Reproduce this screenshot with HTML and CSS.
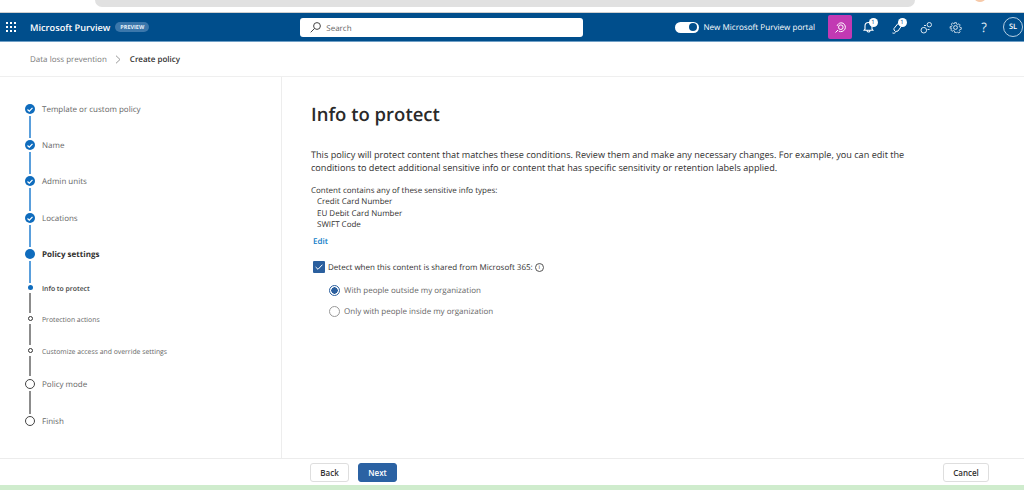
FILE: index.html
```html
<!DOCTYPE html>
<html lang="en">
<head>
<meta charset="utf-8">
<title>Microsoft Purview</title>
<link rel="stylesheet" href="styles.css">
</head>
<body>
<div class="chrome"><div class="chrome-bar"></div><span class="blob"></span></div>
<header class="topbar">
  <svg class="waffle" width="10" height="10" viewBox="0 0 10 10" fill="#fff"><rect x="0" y="0" width="2" height="2"/><rect x="4" y="0" width="2" height="2"/><rect x="8" y="0" width="2" height="2"/><rect x="0" y="4" width="2" height="2"/><rect x="4" y="4" width="2" height="2"/><rect x="8" y="4" width="2" height="2"/><rect x="0" y="8" width="2" height="2"/><rect x="4" y="8" width="2" height="2"/><rect x="8" y="8" width="2" height="2"/></svg>
  <span class="brand">Microsoft Purview</span>
  <span class="preview">PREVIEW</span>
  <div class="search">
    <svg width="11" height="11" viewBox="0 0 11 11" fill="none" stroke="#444" stroke-width="1"><circle cx="7" cy="4" r="3.400"/><path d="M4.500 6.500 .7 10.300"/></svg>
    <span class="search-text">Search</span>
  </div>
  <div class="top-right">
    <span class="toggle"><span class="knob"></span></span>
    <span class="portal">New Microsoft Purview portal</span>
    <span class="pink-btn"><svg width="13" height="13" viewBox="0 0 13 13" fill="none" stroke="#fff" stroke-width="1"><circle cx="6.800" cy="6.200" r="2.300"/><path d="M3.200 5C3.500 2.800 6.500 1 9 2.300c2.300 1.200 3 4 1.800 6-1.200 2.200-4 3-6 1.800M1.500 11.500 4 9"/></svg></span>
    <span class="ico bell"><svg width="11" height="12" viewBox="0 0 11 12" fill="none" stroke="#fff" stroke-width="1.100"><path d="M2 8V5a3.500 3.500 0 0 1 7 0v3l1 1.300H1zM4 9.500a1.500 1.500 0 0 0 3 0"/></svg><span class="badge">1</span></span>
    <span class="ico pen"><svg width="13" height="13" viewBox="0 0 13 13" fill="none" stroke="#fff" stroke-width="1"><path d="M3 7.500 7 2.500l3.500 2.500-3.500 5-2.500.5-1.500-1.500zM1.500 12c1 .4 2 .2 3-.4"/></svg><span class="badge">1</span></span>
    <span class="ico"><svg width="13" height="13" viewBox="0 0 13 13" fill="none" stroke="#d9e6f1" stroke-width="1"><circle cx="9.300" cy="3.700" r="2.200"/><circle cx="3.800" cy="9.200" r="2.800"/><path d="M4 4.500h2M7.500 8.500h2"/></svg></span>
    <span class="ico"><svg width="13" height="13" viewBox="0 0 24 24" fill="none" stroke="#e4edf5" stroke-width="1.800"><circle cx="12" cy="12" r="3.500"/><path d="M10 1h4l.6 3.500 2.300 1 2.900-2 2.800 2.800-2 2.900 1 2.300 3.400.5v4l-3.400.5-1 2.300 2 2.900-2.800 2.800-2.900-2-2.300 1L14 23h-4l-.6-3.500-2.300-1-2.900 2-2.800-2.800 2-2.900-1-2.300L-.2 14v-4l3.600-.5 1-2.300-2-2.900 2.800-2.800 2.900 2 2.300-1z" transform="translate(2.200 2.200) scale(.82)"/></svg></span>
    <span class="ico help">?</span>
    <span class="avatar">SL</span>
  </div>
</header>
<nav class="crumbs">
  <span class="crumb">Data loss prevention</span>
  <svg width="6" height="9" viewBox="0 0 6 9" fill="none" stroke="#9a9a9a"><path d="M1 .7 5 4.500 1 8.300"/></svg>
  <span class="crumb-current">Create policy</span>
</nav>
<main class="wizard">
  <ol class="steps">
    <li class="step h36"><div class="rail"><span class="dot big fill"><svg width="6" height="5" viewBox="0 0 6 5" fill="none" stroke="#fff" stroke-width="1.200"><path d="M.5 2.500 2.300 4.200 5.500.8"/></svg></span><span class="line blue"></span></div><span class="label">Template or custom policy</span></li>
    <li class="step h36"><div class="rail"><span class="dot big fill"><svg width="6" height="5" viewBox="0 0 6 5" fill="none" stroke="#fff" stroke-width="1.200"><path d="M.5 2.500 2.300 4.200 5.500.8"/></svg></span><span class="line blue"></span></div><span class="label">Name</span></li>
    <li class="step h37"><div class="rail"><span class="dot big fill"><svg width="6" height="5" viewBox="0 0 6 5" fill="none" stroke="#fff" stroke-width="1.200"><path d="M.5 2.500 2.300 4.200 5.500.8"/></svg></span><span class="line blue"></span></div><span class="label">Admin units</span></li>
    <li class="step h36"><div class="rail"><span class="dot big fill"><svg width="6" height="5" viewBox="0 0 6 5" fill="none" stroke="#fff" stroke-width="1.200"><path d="M.5 2.500 2.300 4.200 5.500.8"/></svg></span><span class="line blue"></span></div><span class="label">Locations</span></li>
    <li class="step h36"><div class="rail"><span class="dot big fill"></span><span class="line blue"></span></div><span class="label strong">Policy settings</span></li>
    <li class="step h31"><div class="rail"><span class="dot small fill"></span><span class="line grey"></span></div><span class="label small-label strong-sub">Info to protect</span></li>
    <li class="step h32"><div class="rail"><span class="dot small ring"></span><span class="line grey"></span></div><span class="label small-label">Protection actions</span></li>
    <li class="step h31"><div class="rail"><span class="dot small ring"></span><span class="line grey"></span></div><span class="label small-label">Customize access and override settings</span></li>
    <li class="step h37"><div class="rail"><span class="dot big open"></span><span class="line grey"></span></div><span class="label">Policy mode</span></li>
    <li class="step"><div class="rail"><span class="dot big open"></span></div><span class="label">Finish</span></li>
  </ol>
  <section class="content">
    <h1>Info to protect</h1>
    <p class="intro">This policy will protect content that matches these conditions. Review them and make any necessary changes. For example, you can edit the conditions to detect additional sensitive info or content that has specific sensitivity or retention labels applied.</p>
    <div class="types">
      <div>Content contains any of these sensitive info types:</div>
      <ul>
        <li>Credit Card Number</li>
        <li>EU Debit Card Number</li>
        <li>SWIFT Code</li>
      </ul>
    </div>
    <a class="edit">Edit</a>
    <div class="check-row">
      <span class="checkbox"><svg width="8" height="6" viewBox="0 0 8 6" fill="none" stroke="#fff" stroke-width="1"><path d="M.6 3 3 5.300 7.400.7"/></svg></span>
      <span>Detect when this content is shared from Microsoft 365:</span>
      <span class="info">i</span>
    </div>
    <div class="radio-row first"><span class="radio on"></span><span>With people outside my organization</span></div>
    <div class="radio-row"><span class="radio"></span><span>Only with people inside my organization</span></div>
  </section>
</main>
<footer class="actions">
  <button class="btn">Back</button>
  <button class="btn primary">Next</button>
  <button class="btn cancel">Cancel</button>
</footer>
<div class="taskstrip"></div>
</body>
</html>
```
FILE: styles.css
```css
* { box-sizing: border-box; }
html, body { margin: 0; height: 490px; overflow: hidden; }
body {
  display: flex;
  flex-direction: column;
  background: #fff;
  color: #323130;
  font-family: "Open Sans", "Noto Sans", sans-serif;
  font-size: 8px;
  text-rendering: geometricPrecision;
}
.chrome { position: relative; height: 13px; flex: none; border-bottom: 1px solid #cfcfcf; padding: 0 109px 0 95px; }
.chrome-bar { height: 7px; background: #e1e1e1; border-radius: 0 0 10px 10px; }
.blob { position: absolute; left: 975px; top: -4px; width: 10px; height: 6px; border-radius: 50%; background: #f7c9a8; }

.topbar {
  height: 29px; flex: none;
  display: flex; align-items: center;
  background: #004e8c;
  border-bottom: 1px solid #6f9fc6;
  color: #fff;
  padding-left: 6px;
}
.waffle { flex: none; }
.brand { margin-left: 14px; font-size: 9.200px; font-weight: 600; white-space: nowrap; }
.preview {
  margin-left: 5px; height: 10px; padding: 0 5px; border-radius: 5px;
  background: #3b77ab; color: #e5eff8;
  font-size: 5.500px; font-weight: 700; line-height: 10px;
}
.search {
  margin-left: 151px; width: 283px; height: 19px;
  display: flex; align-items: center; gap: 5px; padding-left: 10px;
  background: #fff; border-radius: 3px; color: #666;
  font-size: 8px;
}
.search-text { margin-top: 2px; }
.top-right { margin-left: auto; display: flex; align-items: center; }
.toggle {
  width: 24px; height: 11px; border-radius: 6px; background: #fff;
  display: flex; align-items: center; justify-content: flex-end; padding-right: 2px;
}
.knob { width: 8px; height: 8px; border-radius: 50%; background: #004e8c; }
.portal { margin-left: 4px; font-size: 8.100px; white-space: nowrap; }
.pink-btn {
  margin-left: 13px; margin-right: 1.500px; width: 24px; height: 24px; border-radius: 2px; background: #c239b3;
  display: flex; align-items: center; justify-content: center;
}
.ico { position: relative; width: 29px; display: flex; justify-content: center; align-items: center; height: 24px; }
.badge {
  position: absolute; top: 3px; left: 15px; width: 9px; height: 9px; border-radius: 50%;
  background: #fff; color: #004e8c; font-size: 6px; line-height: 9px; text-align: center;
}
.help { font-size: 13px; color: #dfe9f2; }
.avatar {
  margin: 0 1px 0 4.500px; width: 20px; height: 20px; border-radius: 50%; border: 1px solid #b6cfe3;
  display: flex; align-items: center; justify-content: center;
  font-size: 7.500px; font-weight: 600;
}

.crumbs {
  height: 35px; flex: none; display: flex; align-items: center; gap: 8px;
  padding-left: 30px; border-bottom: 1px solid #efefef; font-size: 8px;
}
.crumb { color: #7a7a7a; }
.crumb-current { color: #323130; font-weight: 600; margin-left: 1px; }

.wizard { height: 382px; flex: none; display: flex; border-bottom: 1px solid #ececec; }
.steps {
  list-style: none; margin: 0; width: 282px; flex: none;
  padding: 27px 0 0 25px;
  border-right: 1px solid #ededed;
}
.step { display: flex; gap: 7px; }
.h31 { height: 31px; } .h32 { height: 32px; }
.h36 { height: 36px; } .h37 { height: 37px; }
.rail { width: 10px; flex: none; display: flex; flex-direction: column; align-items: center; }
.dot { flex: none; border-radius: 50%; display: flex; align-items: center; justify-content: center; }
.big { width: 10px; height: 10px; }
.fill { background: #0f6cbd; }
.open { border: 1.500px solid #444; background: #fff; }
.small { width: 5px; height: 5px; }
.ring { border: 1.500px solid #333; }
.line { flex: 1; width: 2px; margin: 2px 0; }
.small + .line { margin: 3px 0; }
.blue { background: #5a9fdc; }
.grey { background: #8c8c8c; }
.label { margin-top: 1px; color: #666; font-size: 8px; line-height: 10px; white-space: nowrap; }
.strong { color: #323130; font-weight: 700; }
.small-label { margin-top: 1.500px; font-size: 6.850px; line-height: 5px; }
.strong-sub { color: #444; font-weight: 600; }

.content { flex: 1; padding: 0 0 0 29px; min-width: 0; }
h1 { margin: 25px 0 0; font-size: 18.500px; line-height: 26px; font-weight: 600; color: #2a2a2a; }
.intro { margin: 20px 0 0; width: 610px; font-size: 9.150px; line-height: 13px; }
.types { margin-top: 11px; font-size: 8px; line-height: 11.300px; }
.types ul { list-style: none; margin: 0; padding: 0 0 0 6px; }
.edit { display: block; margin: 5.500px 0 0 2px; color: #0f7cc8; font-size: 8px; line-height: 12px; font-weight: 600; }
.check-row { display: flex; align-items: center; margin: 13px 0 0 2px; font-size: 8px; height: 13px; }
.checkbox {
  width: 12px; height: 12px; margin-right: 3px; border-radius: 1px; background: #2b5f9e;
  display: flex; align-items: center; justify-content: center;
}
.info {
  margin-left: 2px; width: 9px; height: 9px; border-radius: 50%; border: 1px solid #555;
  font-size: 6px; line-height: 7px; text-align: center;
}
.radio-row { display: flex; align-items: center; gap: 4px; padding-left: 18px; height: 20.500px; font-size: 8px; color: #666; }
.first { margin-top: 7px; }
.radio { width: 11px; height: 11px; border-radius: 50%; border: 1px solid #999; flex: none; }
.radio.on { border-color: #2b5f9e; background: radial-gradient(circle, #2b5f9e 0 3px, #fff 3.400px); }

.actions { height: 26px; flex: none; display: flex; align-items: center; padding: 0 35px 0 310px; gap: 9px; }
.btn {
  height: 19px; width: 39px; padding: 0; border-radius: 3px; border: 1px solid #dedede; background: #fff;
  font-family: inherit; font-size: 8px; font-weight: 600; color: #323130;
}
.primary { background: #2b62a3; border-color: #2b62a3; color: #fff; }
.cancel { margin-left: auto; width: 46px; }
.taskstrip { flex: 1; background: #cfeccd; }
```
